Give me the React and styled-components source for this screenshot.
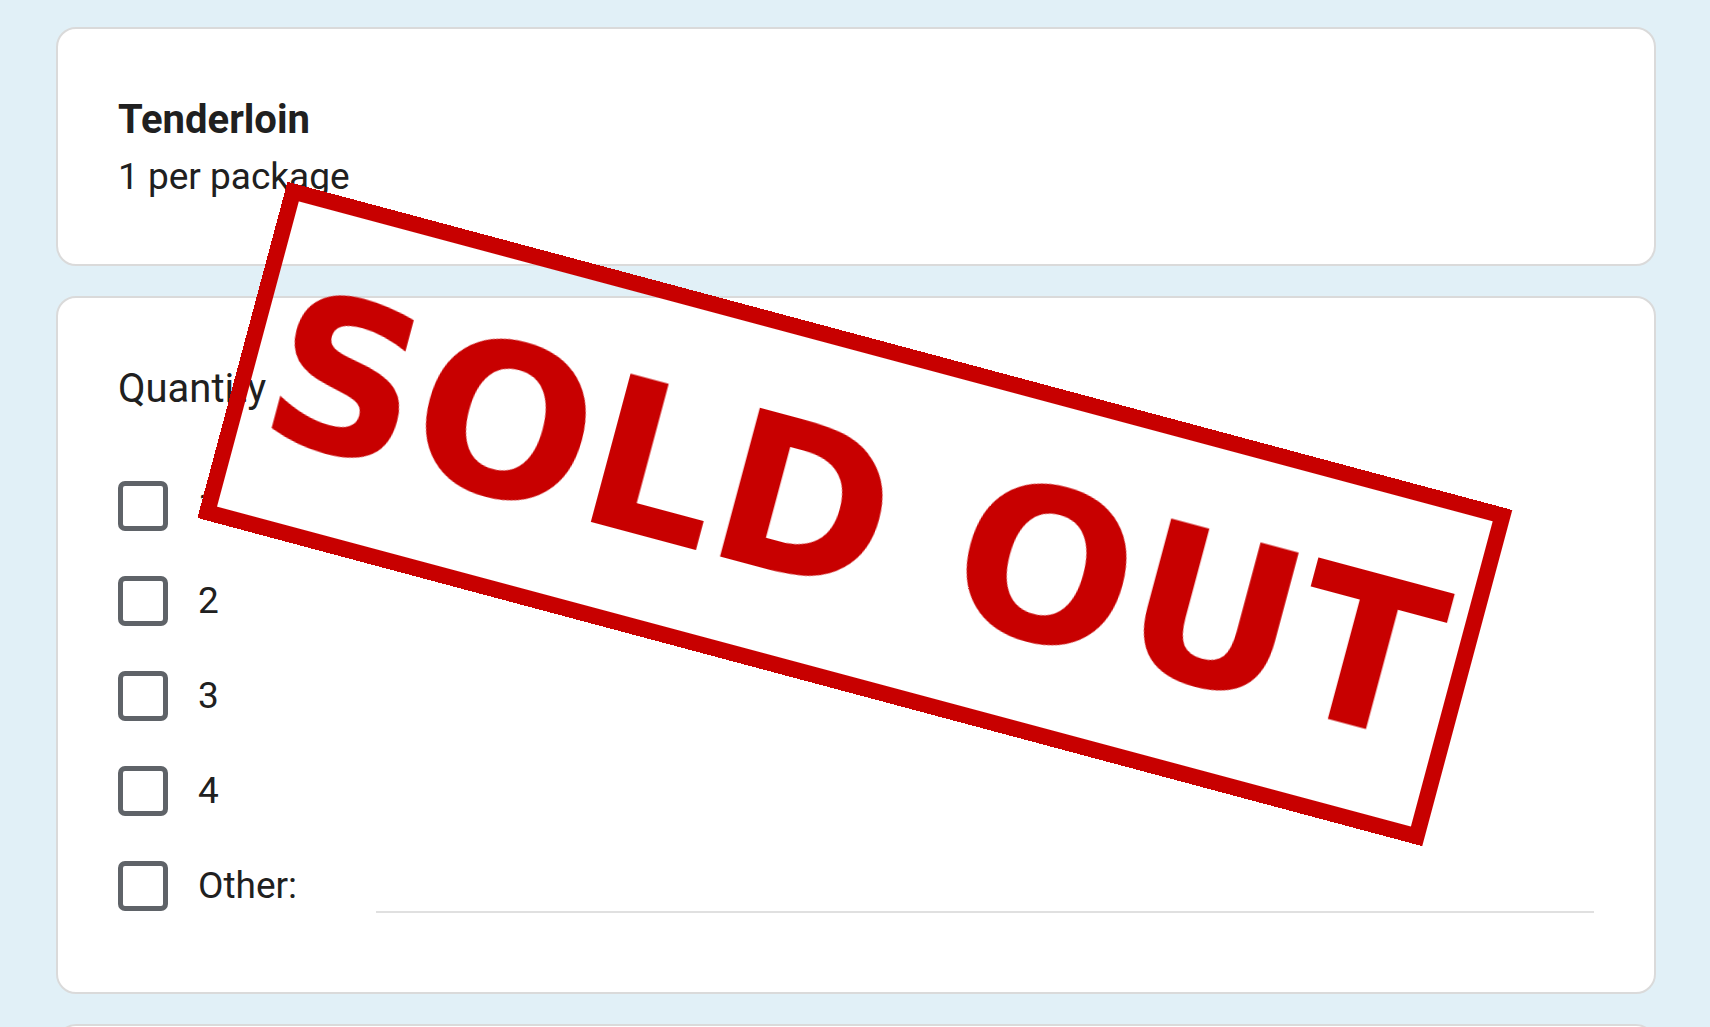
import React from 'react';
import styled, { createGlobalStyle } from 'styled-components';

const GlobalStyle = createGlobalStyle`
  *, *::before, *::after { box-sizing: border-box; }
  body {
    margin: 0;
    background: #e1f0f7;
    color: #202020;
    font-family: Roboto, "Liberation Sans", sans-serif;
  }
`;

const Page = styled.main`
  display: flex;
  flex-direction: column;
  gap: 30px;
  height: 100vh;
  padding: 27px 54px 0 56px;
  overflow: hidden;
`;

const Card = styled.section`
  flex: none;
  padding: 60px;
  min-height: 120px;
  background: #fff;
  border: 2px solid #dadada;
  border-radius: 20px;
`;

const Title = styled.h1`
  margin: 0;
  font-size: 40px;
  font-weight: 700;
  line-height: 62px;
`;

const Description = styled.p`
  margin: 0;
  padding-bottom: 2px;
  font-size: 37px;
  line-height: 51px;
`;

const Question = styled.fieldset`
  margin: 0;
  padding: 0;
  border: 0;
`;

const Legend = styled.legend`
  padding: 0;
  font-size: 40px;
  line-height: 62px;
`;

const Options = styled.div`
  display: flex;
  flex-direction: column;
  gap: 35px;
  padding: 61px 0 11px;
`;

const OptionRow = styled.div`
  display: flex;
  align-items: flex-start;
  height: 60px;
`;

const OptionLabel = styled.label`
  display: flex;
  align-items: center;
  gap: 30px;
  font-size: 37px;
  line-height: 50px;
`;

const Checkbox = styled.input`
  appearance: none;
  flex: none;
  width: 50px;
  height: 50px;
  margin: 0;
  background: #fff;
  border: 5px solid #5f6368;
  border-radius: 7px;

  &:checked {
    background: #5f6368;
  }
`;

const OtherInput = styled.input`
  flex: 1;
  min-width: 0;
  height: 52px;
  margin-left: 79px;
  padding: 0;
  font: inherit;
  font-size: 37px;
  background: transparent;
  border: 0;
  border-bottom: 2px solid #e0e0e0;
  outline: none;
`;

const Stamp = styled.div`
  position: fixed;
  top: 50%;
  left: 50%;
  padding: 40px 17px 32px 16px;
  border: 16px solid #c80000;
  color: #c80000;
  font-family: "DejaVu Sans", sans-serif;
  font-size: 210px;
  font-weight: 700;
  line-height: 244px;
  white-space: nowrap;
  pointer-events: none;
  transform: translate(-50%, -50%) rotate(15deg);
`;

const quantities = ['1', '2', '3', '4'];

function Option({ id, label, children }) {
  return (
    <OptionRow>
      <OptionLabel htmlFor={id}>
        <Checkbox type="checkbox" id={id} name="quantity" value={label} />
        <span>{label}</span>
      </OptionLabel>
      {children}
    </OptionRow>
  );
}

export default function App() {
  return (
    <>
      <GlobalStyle />
      <Page>
        <Card>
          <Title>Tenderloin</Title>
          <Description>1 per package</Description>
        </Card>
        <Card>
          <Question>
            <Legend>Quantity</Legend>
            <Options>
              {quantities.map((q) => (
                <Option key={q} id={`quantity-${q}`} label={q} />
              ))}
              <Option id="quantity-other" label="Other:">
                <OtherInput type="text" aria-label="Other quantity" />
              </Option>
            </Options>
          </Question>
        </Card>
        <Card />
      </Page>
      <Stamp>SOLD OUT</Stamp>
    </>
  );
}
